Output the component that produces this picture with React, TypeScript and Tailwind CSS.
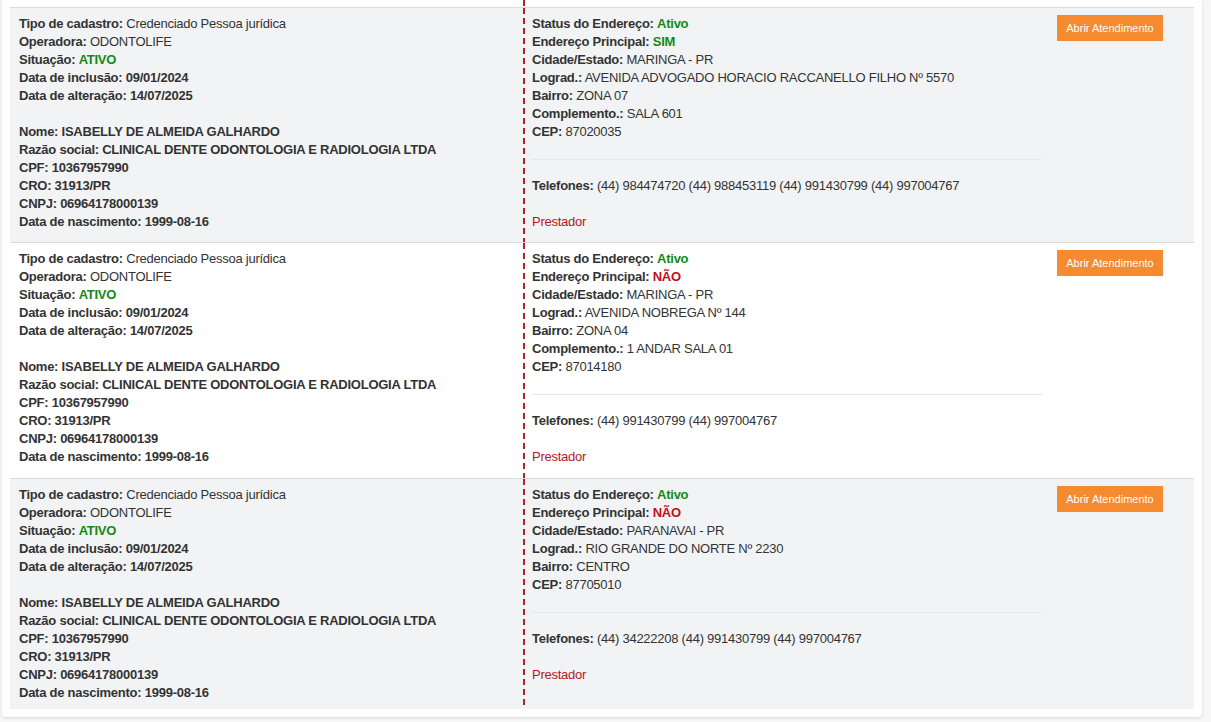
import React from 'react';

type Field = { label: string; value: string; tone?: 'green' | 'red'; boldValue?: boolean };

interface Address {
  status: string;
  principal: 'SIM' | 'NÃO';
  cidade: string;
  lograd: string;
  bairro: string;
  complemento?: string;
  cep: string;
  telefones: string;
}

const RECORDS: { bg: string; pb: string; address: Address }[] = [
  {
    bg: 'bg-[#f2f3f5]',
    pb: 'pb-[11px]',
    address: {
      status: 'Ativo',
      principal: 'SIM',
      cidade: 'MARINGA - PR',
      lograd: 'AVENIDA ADVOGADO HORACIO RACCANELLO FILHO Nº 5570',
      bairro: 'ZONA 07',
      complemento: 'SALA 601',
      cep: '87020035',
      telefones: '(44) 984474720 (44) 988453119 (44) 991430799 (44) 997004767',
    },
  },
  {
    bg: 'bg-white',
    pb: 'pb-[12px]',
    address: {
      status: 'Ativo',
      principal: 'NÃO',
      cidade: 'MARINGA - PR',
      lograd: 'AVENIDA NOBREGA Nº 144',
      bairro: 'ZONA 04',
      complemento: '1 ANDAR SALA 01',
      cep: '87014180',
      telefones: '(44) 991430799 (44) 997004767',
    },
  },
  {
    bg: 'bg-[#f2f3f5]',
    pb: 'pb-[7px]',
    address: {
      status: 'Ativo',
      principal: 'NÃO',
      cidade: 'PARANAVAI - PR',
      lograd: 'RIO GRANDE DO NORTE Nº 2230',
      bairro: 'CENTRO',
      cep: '87705010',
      telefones: '(44) 34222208 (44) 991430799 (44) 997004767',
    },
  },
];

const TOP_FIELDS: Field[] = [
  { label: 'Tipo de cadastro:', value: 'Credenciado Pessoa jurídica' },
  { label: 'Operadora:', value: 'ODONTOLIFE' },
  { label: 'Situação:', value: 'ATIVO', tone: 'green', boldValue: true },
  { label: 'Data de inclusão:', value: '09/01/2024', boldValue: true },
  { label: 'Data de alteração:', value: '14/07/2025', boldValue: true },
];

const PERSON_FIELDS: Field[] = [
  { label: 'Nome:', value: 'ISABELLY DE ALMEIDA GALHARDO' },
  { label: 'Razão social:', value: 'CLINICAL DENTE ODONTOLOGIA E RADIOLOGIA LTDA' },
  { label: 'CPF:', value: '10367957990' },
  { label: 'CRO:', value: '31913/PR' },
  { label: 'CNPJ:', value: '06964178000139' },
  { label: 'Data de nascimento:', value: '1999-08-16' },
];

const DASHED =
  'bg-[linear-gradient(#b0222a_60%,transparent_60%)] bg-[length:2px_10px] bg-repeat-y bg-[position:0_0]';

function Line({ field }: { field: Field }) {
  const tone =
    field.tone === 'green' ? 'text-[#138a13]' : field.tone === 'red' ? 'text-[#c0101a]' : '';
  return (
    <div>
      <span className="font-bold">{field.label}</span>{' '}
      <span className={`${field.boldValue ? 'font-bold' : ''} ${tone}`}>{field.value}</span>
    </div>
  );
}

function AddressCell({ a, pb }: { a: Address; pb: string }) {
  const fields: Field[] = [
    { label: 'Status do Endereço:', value: a.status, tone: 'green', boldValue: true },
    {
      label: 'Endereço Principal:',
      value: a.principal,
      tone: a.principal === 'SIM' ? 'green' : 'red',
      boldValue: true,
    },
    { label: 'Cidade/Estado:', value: a.cidade },
    { label: 'Lograd.:', value: a.lograd },
    { label: 'Bairro:', value: a.bairro },
  ];
  if (a.complemento) fields.push({ label: 'Complemento.:', value: a.complemento });
  fields.push({ label: 'CEP:', value: a.cep });

  return (
    <div className={`w-[527px] shrink-0 pl-[9px] pr-[8px] pt-[7px] ${pb} ${DASHED}`}>
      {fields.map((f) => (
        <Line key={f.label} field={f} />
      ))}
      <hr className="mt-[18px] mb-[17px] border-0 border-t border-[#e8e8e8]" />
      <Line field={{ label: 'Telefones:', value: a.telefones }} />
      <div className="mt-[18px] text-[#b3191f]">Prestador</div>
    </div>
  );
}

export default function App() {
  return (
    <div
      className="min-h-screen bg-[#f6f6f6] text-[13px] leading-[18px] tracking-[-0.25px] text-[#333]"
      style={{ fontFamily: '"Liberation Sans", Arial, sans-serif' }}
    >
      <div className="ml-[2px] w-[1200px] rounded-b bg-white px-[8px] pb-[8px] shadow-[0_1px_3px_rgba(0,0,0,0.12)]">
        {/* tail of the dashed divider from the row above */}
        <div className={`ml-[513px] h-[7px] w-[2px] ${DASHED}`} />

        {RECORDS.map((r, i) => (
          <div key={i} className={`flex border-t border-[#dcdcdc] ${r.bg}`}>
            <div className={`w-[513px] shrink-0 pl-[9px] pt-[7px] ${r.pb}`}>
              {TOP_FIELDS.map((f) => (
                <Line key={f.label} field={f} />
              ))}
              <div className="h-[18px]" />
              {PERSON_FIELDS.map((f) => (
                <div key={f.label} className="font-bold">
                  {f.label} {f.value}
                </div>
              ))}
            </div>

            <AddressCell a={r.address} pb={r.pb} />

            <div className="flex-1 pl-[7px] pt-[7px]">
              <button className="h-[26px] w-[106px] bg-[#f68a2e] text-[11px] tracking-normal text-white">
                Abrir Atendimento
              </button>
            </div>
          </div>
        ))}
      </div>
    </div>
  );
}
